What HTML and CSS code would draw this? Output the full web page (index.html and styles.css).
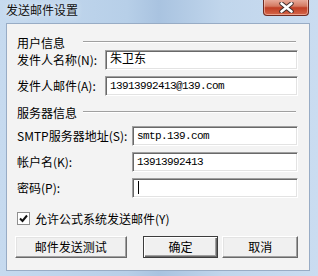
FILE: index.html
```html
<!DOCTYPE html>
<html lang="zh-CN">
<head>
    <meta charset="UTF-8">
    <title>发送邮件设置</title>
    <link rel="stylesheet" href="styles.css">
</head>
<body>
    <div class="window">
        <div class="titlebar">
            <span class="title">发送邮件设置</span>
            <div class="close-btn">
                <svg width="15" height="11" viewBox="0 0 15 11">
                    <path d="M2.5 1.5 L12.5 9.5 M12.5 1.5 L2.5 9.5" stroke="#3b2a2a" stroke-width="4.4" stroke-linecap="round"/>
                    <path d="M2.5 1.5 L12.5 9.5 M12.5 1.5 L2.5 9.5" stroke="#fff" stroke-width="2.6" stroke-linecap="round"/>
                </svg>
            </div>
        </div>

        <div class="client">
            <div class="group-head">用户信息</div>
            <div class="fields fields-user">
                <label>发件人名称(N):</label>
                <div class="edit edit-name">朱卫东</div>
                <label>发件人邮件(A):</label>
                <div class="edit">13913992413@139.com</div>
            </div>

            <div class="group-head group-server">服务器信息</div>
            <div class="fields fields-server">
                <label>SMTP服务器地址(S):</label>
                <div class="edit">smtp.139.com</div>
                <label>帐户名(K):</label>
                <div class="edit">13913992413</div>
                <label>密码(P):</label>
                <div class="edit"><span class="caret"></span></div>
            </div>

            <div class="check-row">
                <span class="checkbox">
                    <svg width="11" height="11" viewBox="0 0 11 11">
                        <path d="M2 5.5 L4.5 8 L9 2.5" fill="none" stroke="#111" stroke-width="2"/>
                    </svg>
                </span>
                <span>允许公式系统发送邮件(Y)</span>
            </div>

            <div class="buttons">
                <div class="btn btn-test">邮件发送测试</div>
                <div class="btn btn-ok">确定</div>
                <div class="btn btn-cancel">取消</div>
            </div>
        </div>
    </div>
</body>
</html>
```

FILE: styles.css
```css
/* Dialog: send mail settings */
body {
    margin: 0;
    font-family: "Noto Sans CJK SC", "Liberation Sans", sans-serif;
    font-size: 12px;
    color: #000;
}

.window {
    position: relative;
    width: 318px;
    height: 276px;
    background: linear-gradient(90deg, #c6daef 0%, #b7cfe8 40%, #a9c3e0 50%, #c1d6ec 70%, #cadcf0 100%);
    overflow: hidden;
}

.titlebar {
    height: 23px;
}

.title {
    display: block;
    padding: 3px 0 0 6px;
    line-height: 14px;
    font-size: 12px;
    color: #111;
    text-shadow: 0 0 6px #eaf2fb;
}

.close-btn {
    position: absolute;
    top: -1px;
    left: 263px;
    width: 44px;
    height: 16px;
    border: 1px solid #6e2b22;
    border-top: none;
    border-radius: 0 0 4px 4px;
    background: linear-gradient(#eab1a2 0%, #d47a62 45%, #c03e24 55%, #d5674a 100%);
    display: flex;
    align-items: center;
    justify-content: center;
    box-shadow: inset 0 0 0 1px rgba(255, 220, 210, 0.5);
}

.client {
    margin: 0 8px 0 6px;
    height: 248px;
    box-sizing: border-box;
    border: 1px solid #98acc5;
    background-color: #f3f3f3;
    padding: 12px 11px 0 10px;
}

.group-head {
    display: flex;
    height: 14px;
    line-height: 14px;
}

.group-head::after {
    content: "";
    flex: 1;
    height: 0;
    margin: 5px 2px 0 18px;
    border-top: 1px solid #a0a0a0;
    border-bottom: 1px solid #fff;
}

.group-server {
    margin-top: 10px;
}

.group-server::after {
    margin-left: 6px;
}

.fields {
    display: grid;
    row-gap: 6px;
    align-items: center;
}

.fields-user {
    grid-template-columns: 88px 1fr;
}

.fields-server {
    grid-template-columns: 115px 1fr;
    margin-top: 6px;
}

.fields label {
    white-space: nowrap;
    line-height: 14px;
}

.edit {
    height: 20px;
    box-sizing: border-box;
    border: 1px solid;
    border-color: #a0a0a0 #fff #fff #a0a0a0;
    box-shadow: inset 1px 1px #696969, inset -1px -1px #e3e3e3;
    background-color: #fff;
    padding: 0 0 0 4px;
    font-family: "Liberation Mono", "Noto Sans CJK SC", monospace;
    font-size: 11px;
    letter-spacing: -0.6px;
    line-height: 18px;
    white-space: nowrap;
}

.edit-name {
    font-size: 12px;
    letter-spacing: 0;
}

.caret {
    display: inline-block;
    width: 1px;
    height: 13px;
    margin: 2px 0 0 1px;
    background-color: #000;
    vertical-align: top;
}

.check-row {
    display: flex;
    align-items: center;
    gap: 5px;
    height: 16px;
    margin-top: 12px;
}

.checkbox {
    width: 13px;
    height: 13px;
    box-sizing: border-box;
    border: 1px solid #8f8f8f;
    background-color: #fff;
    display: flex;
    align-items: center;
    justify-content: center;
}

.buttons {
    display: flex;
    margin: 10px 0 0 -2px;
}

.btn {
    height: 22px;
    box-sizing: border-box;
    border: 1px solid;
    border-color: #fff #696969 #696969 #fff;
    box-shadow: inset -1px -1px #a0a0a0, inset 1px 1px #e3e3e3;
    background-color: #f0f0f0;
    line-height: 20px;
    text-align: center;
}

.btn-test {
    width: 112px;
}

.btn-ok {
    width: 76px;
    margin-left: 16px;
    border-color: #3c3c3c;
    box-shadow: inset 1px 1px #fff, inset -1px -1px #696969, inset -2px -2px #a0a0a0;
}

.btn-cancel {
    width: 76px;
    margin-left: 4px;
}
```
